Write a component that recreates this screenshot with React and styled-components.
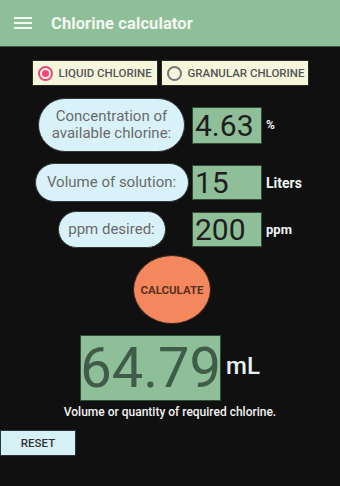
import React, { useState } from "react";
import styled, { createGlobalStyle } from "styled-components";

const GlobalStyle = createGlobalStyle`
  html, body {
    margin: 0;
    padding: 0;
    background: #101010;
  }
  body {
    font-family: Roboto, "Noto Sans", Arial, sans-serif;
  }
`;

const Screen = styled.div`
  width: 340px;
  height: 486px;
  background: #101010;
  overflow: hidden;
`;

const Toolbar = styled.header`
  height: 46px;
  background: #8fbf98;
  border-bottom: 1px solid #3e5844;
  display: flex;
  align-items: center;
  padding-left: 14px;
  gap: 19px;
`;

const Title = styled.h1`
  margin: 0;
  font-size: 16.5px;
  font-weight: 700;
  color: #f4f8f2;
  letter-spacing: 0.1px;
`;

const Content = styled.main`
  display: flex;
  flex-direction: column;
  align-items: center;
  padding-top: 13px;
`;

const RadioGroup = styled.div`
  display: flex;
  gap: 3px;
`;

const RadioBox = styled.label`
  width: ${(p) => p.$w}px;
  height: 26px;
  box-sizing: border-box;
  background: #f6f6dc;
  border: 1px solid #2a2a22;
  display: flex;
  align-items: center;
  padding-left: 5px;
  gap: 4px;
  overflow: hidden;
  white-space: nowrap;
  cursor: pointer;
`;

const RadioDot = styled.span`
  flex: none;
  width: 15px;
  height: 15px;
  box-sizing: border-box;
  border-radius: 50%;
  border: 2px solid ${(p) => (p.$on ? "#f0457c" : "#777")};
  display: flex;
  align-items: center;
  justify-content: center;
  margin-right: 2px;
  &::after {
    content: "";
    width: 7px;
    height: 7px;
    border-radius: 50%;
    background: ${(p) => (p.$on ? "#f0457c" : "transparent")};
  }
`;

const RadioText = styled.span`
  font-size: 11.5px;
  font-weight: 500;
  color: #555;
`;

const Fields = styled.div`
  align-self: flex-start;
  margin-top: 12px;
  padding-left: 31px;
  display: grid;
  grid-template-columns: 161px 70px auto;
  align-items: center;
`;

const Pill = styled.div`
  justify-self: center;
  width: ${(p) => p.$w}px;
  height: ${(p) => p.$h}px;
  box-sizing: border-box;
  background: #d9f2f9;
  border: 1px solid #30383a;
  border-radius: 999px;
  display: flex;
  align-items: center;
  justify-content: center;
  text-align: center;
  font-size: 15px;
  line-height: 17px;
  color: #6a6a6a;
  margin-top: ${(p) => p.$mt || 0}px;
`;

const Field = styled.input`
  width: 70px;
  height: ${(p) => p.$h}px;
  box-sizing: border-box;
  background: #8fbf98;
  border: 1px solid #2f4a35;
  padding: 0 0 0 2px;
  font-family: Roboto, sans-serif;
  font-size: 30px;
  color: #1e1e1e;
  outline: none;
  margin-top: ${(p) => p.$mt || 0}px;
`;

const Unit = styled.span`
  margin-left: 4px;
  font-size: ${(p) => p.$size}px;
  font-weight: 700;
  color: #eef3f3;
  margin-top: ${(p) => p.$mt || 0}px;
`;

const CalcButton = styled.button`
  margin-top: 7px;
  margin-left: 4px;
  width: 78px;
  height: 69px;
  border-radius: 50%;
  background: #f5875f;
  border: 1px solid #3a2418;
  font-family: Roboto, sans-serif;
  font-size: 11.5px;
  font-weight: 700;
  color: #5a3020;
  padding: 0;
  cursor: pointer;
`;

const ResultRow = styled.div`
  margin-top: 11px;
  display: flex;
  align-items: center;
  gap: 5px;
`;

const ResultBox = styled.div`
  width: 141px;
  height: 66px;
  box-sizing: border-box;
  background: #8fbf98;
  border: 1px solid #2f4a35;
  display: flex;
  align-items: center;
  justify-content: center;
  font-size: 56px;
  color: #3f5c48;
  line-height: 1;
`;

const ResultUnit = styled.span`
  font-size: 24px;
  font-weight: 500;
  color: #e6f3f6;
  margin-top: -4px;
`;

const Caption = styled.p`
  margin: 4px 0 0;
  font-size: 12px;
  line-height: 14px;
  font-weight: 500;
  color: #f2f2f2;
`;

const ResetButton = styled.button`
  align-self: flex-start;
  margin-top: 11px;
  width: 76px;
  height: 26px;
  background: #d6f0f8;
  border: 1px solid #2a3336;
  font-family: Roboto, sans-serif;
  font-size: 11.5px;
  font-weight: 500;
  color: #333;
  padding: 0;
  cursor: pointer;
`;

const MenuIcon = () => (
  <svg width="18" height="14" viewBox="0 0 18 14">
    <rect x="0" y="1" width="18" height="2" fill="#f4f8f2" />
    <rect x="0" y="6" width="18" height="2" fill="#f4f8f2" />
    <rect x="0" y="11" width="18" height="2" fill="#f4f8f2" />
  </svg>
);

export default function App() {
  const [kind, setKind] = useState("liquid");
  const [conc, setConc] = useState("4.63");
  const [vol, setVol] = useState("15");
  const [ppm, setPpm] = useState("200");

  return (
    <Screen>
      <GlobalStyle />
      <Toolbar>
        <MenuIcon />
        <Title>Chlorine calculator</Title>
      </Toolbar>
      <Content>
        <RadioGroup>
          <RadioBox $w={126} onClick={() => setKind("liquid")}>
            <RadioDot $on={kind === "liquid"} />
            <RadioText>LIQUID CHLORINE</RadioText>
          </RadioBox>
          <RadioBox $w={148} onClick={() => setKind("granular")}>
            <RadioDot $on={kind === "granular"} />
            <RadioText>GRANULAR CHLORINE</RadioText>
          </RadioBox>
        </RadioGroup>

        <Fields>
          <Pill $w={147} $h={54}>
            Concentration of
            <br />
            available chlorine:
          </Pill>
          <Field $h={37} value={conc} onChange={(e) => setConc(e.target.value)} />
          <Unit $size={12}>%</Unit>

          <Pill $w={154} $h={39} $mt={11}>Volume of solution:</Pill>
          <Field $h={35} $mt={11} value={vol} onChange={(e) => setVol(e.target.value)} />
          <Unit $size={14} $mt={11}>Liters</Unit>

          <Pill $w={108} $h={37} $mt={9}>ppm desired:</Pill>
          <Field $h={35} $mt={9} value={ppm} onChange={(e) => setPpm(e.target.value)} />
          <Unit $size={13} $mt={9}>ppm</Unit>
        </Fields>

        <CalcButton>CALCULATE</CalcButton>

        <ResultRow>
          <ResultBox>64.79</ResultBox>
          <ResultUnit>mL</ResultUnit>
        </ResultRow>
        <Caption>Volume or quantity of required chlorine.</Caption>

        <ResetButton>RESET</ResetButton>
      </Content>
    </Screen>
  );
}
